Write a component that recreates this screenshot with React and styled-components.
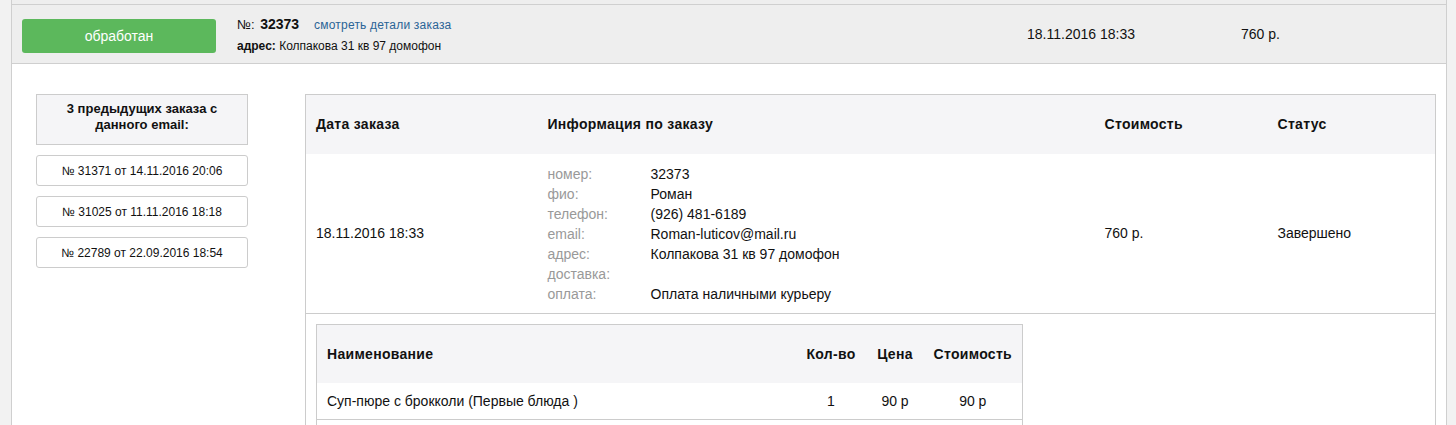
import React from "react";
import styled, { createGlobalStyle } from "styled-components";

const GlobalStyle = createGlobalStyle`
  body {
    margin: 0;
    background: #f2f2f2;
    font-family: "Liberation Sans", Arial, sans-serif;
    color: #111;
  }
`;

// Order card with side borders
const OrderCard = styled.div`
  margin: 0 9px 0 11px;
  border-left: 1px solid #cfcfcf;
  border-right: 1px solid #cfcfcf;
  background: #fff;
`;

// tail of the previous card in the list
const PrevTail = styled.div`
  height: 4px;
  background: #eeeeee;
  border-bottom: 1px solid #cfcfcf;
`;

const OrderHead = styled.div`
  display: flex;
  align-items: center;
  height: 58px;
  padding: 0 10px;
  background: #eeeeee;
  border-bottom: 1px solid #cfcfcf;
`;

const StatusButton = styled.button`
  width: 194px;
  height: 34px;
  margin-top: 3px;
  border: none;
  border-radius: 3px;
  background: #5cb85c;
  color: #fff;
  font-family: inherit;
  font-size: 14px;
  cursor: pointer;
`;

const HeadInfo = styled.div`
  width: 790px;
  margin-left: 21px;
  display: flex;
  flex-direction: column;
  gap: 6px;
  font-size: 12px;
`;

const Number = styled.div`
  font-size: 13px;
  line-height: 16px;

  b {
    font-size: 14px;
    margin-left: 2px;
  }
`;

const DetailsLink = styled.a`
  margin-left: 15px;
  color: #2a6496;
  font-size: 12px;
  letter-spacing: 0.2px;
  text-decoration: none;
`;

const HeadCell = styled.div`
  width: ${({ w }) => w || "auto"};
  font-size: 14px;
`;

const OrderBody = styled.div`
  display: flex;
  align-items: flex-start;
  padding: 30px 10px 0 24px;
  height: 361px;
  overflow: hidden;
`;

const History = styled.div`
  width: 212px;
  flex-shrink: 0;
  display: flex;
  flex-direction: column;
  gap: 10px;
`;

const HistoryTitle = styled.div`
  box-sizing: border-box;
  height: 51px;
  padding: 6px 10px;
  border: 1px solid #cccccc;
  background: #f5f5f7;
  text-align: center;
  font-size: 13px;
  font-weight: bold;
  line-height: 16px;
`;

const HistoryItem = styled.button`
  box-sizing: border-box;
  height: 31px;
  border: 1px solid #cccccc;
  border-radius: 3px;
  background: #fff;
  font-family: inherit;
  font-size: 12px;
  color: #111;
  cursor: pointer;
`;

const Table = styled.table`
  border-collapse: collapse;
  border: 1px solid #cccccc;
  font-size: 14px;
  table-layout: fixed;
  width: ${({ w }) => w};
  margin-left: ${({ ml }) => ml || 0};
`;

const Th = styled.th`
  box-sizing: border-box;
  background: #f5f5f7;
  text-align: ${({ center }) => (center ? "center" : "left")};
  height: 59px;
  padding: 0 10px;
  font-weight: bold;
  letter-spacing: 0.3px;
  width: ${({ w }) => w || "auto"};
`;

const Td = styled.td`
  text-align: ${({ center }) => (center ? "center" : "left")};
  vertical-align: middle;
  padding: ${({ pad }) => pad || "10px"};
  border-bottom: 1px solid #cccccc;
`;

const Details = styled.dl`
  display: grid;
  grid-template-columns: 103px 1fr;
  margin: 0;
  line-height: 20px;

  dt {
    color: #999;
  }
  dd {
    margin: 0;
  }
`;

const info = [
  ["номер:", "32373"],
  ["фио:", "Роман"],
  ["телефон:", "(926) 481-6189"],
  ["email:", "Roman-luticov@mail.ru"],
  ["адрес:", "Колпакова 31 кв 97 домофон"],
  ["доставка:", ""],
  ["оплата:", "Оплата наличными курьеру"],
];

const history = [
  "№ 31371 от 14.11.2016 20:06",
  "№ 31025 от 11.11.2016 18:18",
  "№ 22789 от 22.09.2016 18:54",
];

const items = [
  { name: "Суп-пюре с брокколи (Первые блюда )", qty: 1, price: "90 р", sum: "90 р" },
];

export default function App() {
  return (
    <>
      <GlobalStyle />
      <OrderCard>
        <PrevTail />
        <OrderHead>
          <StatusButton>обработан</StatusButton>
          <HeadInfo>
            <Number>
              №: <b>32373</b>
              <DetailsLink href="#">смотреть детали заказа</DetailsLink>
            </Number>
            <div>
              <b>адрес:</b> Колпакова 31 кв 97 домофон
            </div>
          </HeadInfo>
          <HeadCell w="214px">18.11.2016 18:33</HeadCell>
          <HeadCell>760 р.</HeadCell>
        </OrderHead>

        <OrderBody>
          <History>
            <HistoryTitle>3 предыдущих заказа с данного email:</HistoryTitle>
            {history.map((h) => (
              <HistoryItem key={h}>{h}</HistoryItem>
            ))}
          </History>

          <Table w="1131px" ml="57px">
            <thead>
              <tr>
                <Th w="232px">Дата заказа</Th>
                <Th w="557px">Информация по заказу</Th>
                <Th w="173px">Стоимость</Th>
                <Th>Статус</Th>
              </tr>
            </thead>
            <tbody>
              <tr>
                <Td>18.11.2016 18:33</Td>
                <Td pad="10px 10px 9px">
                  <Details>
                    {info.map(([k, v]) => (
                      <React.Fragment key={k}>
                        <dt>{k}</dt>
                        <dd>{v || "\u00a0"}</dd>
                      </React.Fragment>
                    ))}
                  </Details>
                </Td>
                <Td>760 р.</Td>
                <Td>Завершено</Td>
              </tr>
              <tr>
                <Td colSpan={4} pad="10px">
                  <Table w="707px">
                    <thead>
                      <tr>
                        <Th w="479px">Наименование</Th>
                        <Th center w="71px">Кол-во</Th>
                        <Th center w="57px">Цена</Th>
                        <Th center>Стоимость</Th>
                      </tr>
                    </thead>
                    <tbody>
                      {items.map((it) => (
                        <tr key={it.name}>
                          <Td>{it.name}</Td>
                          <Td center>{it.qty}</Td>
                          <Td center>{it.price}</Td>
                          <Td center>{it.sum}</Td>
                        </tr>
                      ))}
                      <tr>
                        <Td colSpan={4} pad="20px 10px" />
                      </tr>
                    </tbody>
                  </Table>
                </Td>
              </tr>
            </tbody>
          </Table>
        </OrderBody>
      </OrderCard>
    </>
  );
}
